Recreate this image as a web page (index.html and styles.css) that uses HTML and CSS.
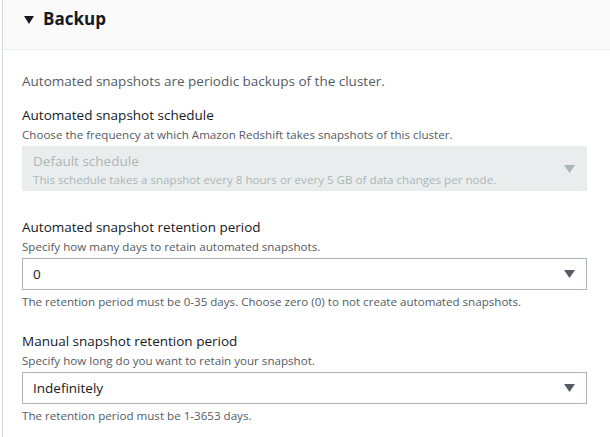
FILE: index.html
```html
<!DOCTYPE html>
<html>
<head>
<meta charset="utf-8">
<link rel="stylesheet" href="styles.css">
</head>
<body>
<div class="panel">
  <div class="header">
    <svg class="caret" width="10" height="8" viewBox="0 0 10 8"><path d="M0 0H10L5 8Z" fill="#16191f"/></svg>
    <h2 class="title">Backup</h2>
  </div>
  <div class="content">
    <p class="intro">Automated snapshots are periodic backups of the cluster.</p>

    <div class="field first">
      <div class="label">Automated snapshot schedule</div>
      <div class="desc">Choose the frequency at which Amazon Redshift takes snapshots of this cluster.</div>
      <div class="select disabled">
        <div class="opt">
          <div class="opt-title">Default schedule</div>
          <div class="opt-desc">This schedule takes a snapshot every 8 hours or every 5 GB of data changes per node.</div>
        </div>
        <svg class="arrow" width="11" height="8" viewBox="0 0 11 8"><path d="M0 0H11L5.5 8Z" fill="#aab7b8"/></svg>
      </div>
    </div>

    <div class="field">
      <div class="label">Automated snapshot retention period</div>
      <div class="desc">Specify how many days to retain automated snapshots.</div>
      <div class="select">
        <div class="value">0</div>
        <svg class="arrow" width="11" height="8" viewBox="0 0 11 8"><path d="M0 0H11L5.5 8Z" fill="#545b64"/></svg>
      </div>
      <div class="constraint">The retention period must be 0-35 days. Choose zero (0) to not create automated snapshots.</div>
    </div>

    <div class="field">
      <div class="label">Manual snapshot retention period</div>
      <div class="desc">Specify how long do you want to retain your snapshot.</div>
      <div class="select">
        <div class="value">Indefinitely</div>
        <svg class="arrow" width="11" height="8" viewBox="0 0 11 8"><path d="M0 0H11L5.5 8Z" fill="#545b64"/></svg>
      </div>
      <div class="constraint">The retention period must be 1-3653 days.</div>
    </div>
  </div>
</div>
</body>
</html>
```
FILE: styles.css
```css
html, body {
  margin: 0;
  padding: 0;
  background: #ffffff;
  overflow: hidden;
}
body {
  font-family: "Open Sans", "Noto Sans", sans-serif;
  color: #16191f;
  padding-left: 2px;
}
.panel {
  border-left: 1px solid #d5dbdb;
  height: 437px;
  box-sizing: border-box;
}
.header {
  height: 50px;
  box-sizing: border-box;
  background: #fafafa;
  border-bottom: 1px solid #eaeded;
  display: flex;
  align-items: center;
  padding: 0 0 11px 21px;
  gap: 9px;
}
.caret {
  margin-top: 1px;
}
.title {
  margin: 0;
  font-size: 17px;
  font-weight: 700;
  line-height: 22px;
  color: #16191f;
}
.content {
  padding: 20px 0 0 19px;
  width: 565px;
}
.intro {
  margin: 0 0 13px;
  font-size: 13.5px;
  line-height: 22px;
  color: #545b64;
}
.field {
  margin-bottom: 21px;
}
.field.first {
  margin-bottom: 26px;
}
.label {
  font-size: 13.5px;
  line-height: 21px;
  color: #16191f;
}
.desc {
  font-size: 11.6px;
  line-height: 17px;
  color: #545b64;
  margin-bottom: 3px;
}
.select {
  display: flex;
  align-items: center;
  justify-content: space-between;
  border: 1px solid #aab7b8;
  height: 32px;
  box-sizing: border-box;
  padding: 0 11px 0 10px;
}
.select.disabled {
  background: #eaeded;
  border-color: #eaeded;
  height: 45px;
  padding-top: 5px;
  align-items: flex-start;
}
.select.disabled .arrow {
  margin-top: 13px;
}
.value {
  font-size: 13.5px;
  color: #16191f;
}
.opt-title {
  font-size: 13.5px;
  line-height: 19px;
  color: #aab7b8;
}
.opt-desc {
  font-size: 11.6px;
  line-height: 17px;
  color: #aab7b8;
}
.constraint {
  font-size: 11.6px;
  line-height: 17px;
  color: #545b64;
  margin-top: 3px;
}
```
